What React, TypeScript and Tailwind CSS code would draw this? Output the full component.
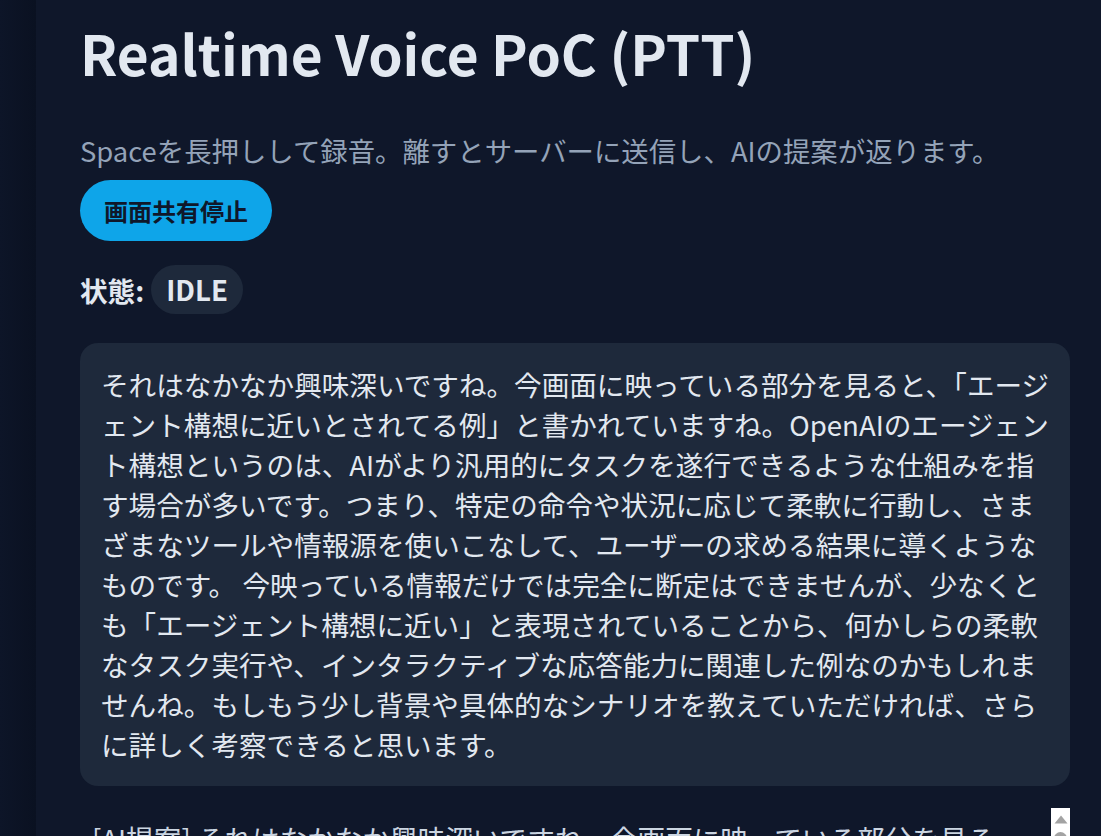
export default function App() {
  const reply =
    "それはなかなか興味深いですね。今画面に映っている部分を見ると、「エージェント構想に近いとされてる例」と書かれていますね。OpenAIのエージェント構想というのは、AIがより汎用的にタスクを遂行できるような仕組みを指す場合が多いです。つまり、特定の命令や状況に応じて柔軟に行動し、さまざまなツールや情報源を使いこなして、ユーザーの求める結果に導くようなものです。 今映っている情報だけでは完全に断定はできませんが、少なくとも「エージェント構想に近い」と表現されていることから、何かしらの柔軟なタスク実行や、インタラクティブな応答能力に関連した例なのかもしれませんね。もしもう少し背景や具体的なシナリオを教えていただければ、さらに詳しく考察できると思います。";

  const log = [
    "[AI提案] それはなかなか興味深いですね。今画面に映っている部分を見ると、「エージェント構想に近いとされてる例」と書かれていますね。",
    "[AI提案] OpenAIのエージェント構想というのは、AIがより汎用的にタスクを遂行できるような仕組みを指す場合が多いです。",
    "[AI提案] 今映っている情報だけでは完全に断定はできませんが、少なくとも「エージェント構想に近い」と表現されています。",
  ];

  return (
    <div
      className="flex h-[836px] w-full overflow-hidden bg-[#0f172a] text-[#e2e8f0]"
      style={{ fontFamily: '"Noto Sans CJK JP", "Noto Sans", sans-serif' }}
    >
      {/* left rail */}
      <div className="w-[36px] shrink-0 bg-gradient-to-r from-[#0d1528] to-[#0a1121]" />

      {/* main column */}
      <main className="flex w-[990px] shrink-0 flex-col pl-[44px] box-content">
        <h1 className="mt-[16px] text-[55px] font-bold leading-[72px] text-[#e2e8f0]">
          Realtime Voice PoC (PTT)
        </h1>

        <p className="mt-[42px] text-[27.4px] leading-[40px] text-[#94a3b8]">
          Spaceを長押しして録音。離すとサーバーに送信し、AIの提案が返ります。
        </p>

        <div className="mt-[10px]">
          <button className="h-[61px] rounded-full bg-[#0ea5e9] px-[24px] text-[24px] font-bold text-[#0f172a]">
            画面共有停止
          </button>
        </div>

        <div className="mt-[24px] flex items-center gap-[7px]">
          <span className="text-[27.6px] font-bold leading-[40px]">状態:</span>
          <span className="rounded-full bg-[#1e293b] px-[15px] py-[4px] text-[27.6px] font-bold leading-[41px] text-[#e2e8f0]">
            IDLE
          </span>
        </div>

        <section className="mt-[29px] rounded-[18px] bg-[#1e293b] px-[20px] pt-[21px] pb-[22px]">
          <p className="pl-[1px] text-[27.6px] leading-[40px] text-[#e2e8f0]">{reply}</p>
        </section>

        {/* transcript log, scrollable */}
        <div className="relative mt-[22px] h-[240px] shrink-0">
          <div className="h-full overflow-hidden pt-[10px] pl-[12px] pr-[24px]">
            {log.map((line, i) => (
              <p key={i} className="text-[27.6px] leading-[40px] text-[#cbd5e1]">
                {line}
              </p>
            ))}
          </div>
          {/* scrollbar */}
          <div className="absolute right-0 top-0 flex h-full w-[19px] flex-col items-center bg-white">
            <svg width="14" height="9" viewBox="0 0 14 9" className="mt-[7px]">
              <polygon points="7,0.5 13.5,8.5 0.5,8.5" fill="#a3a3a3" />
            </svg>
            <div className="mt-[8px] h-[60px] w-[13px] rounded-full bg-[#a3a3a3]" />
          </div>
        </div>
      </main>
    </div>
  );
}
